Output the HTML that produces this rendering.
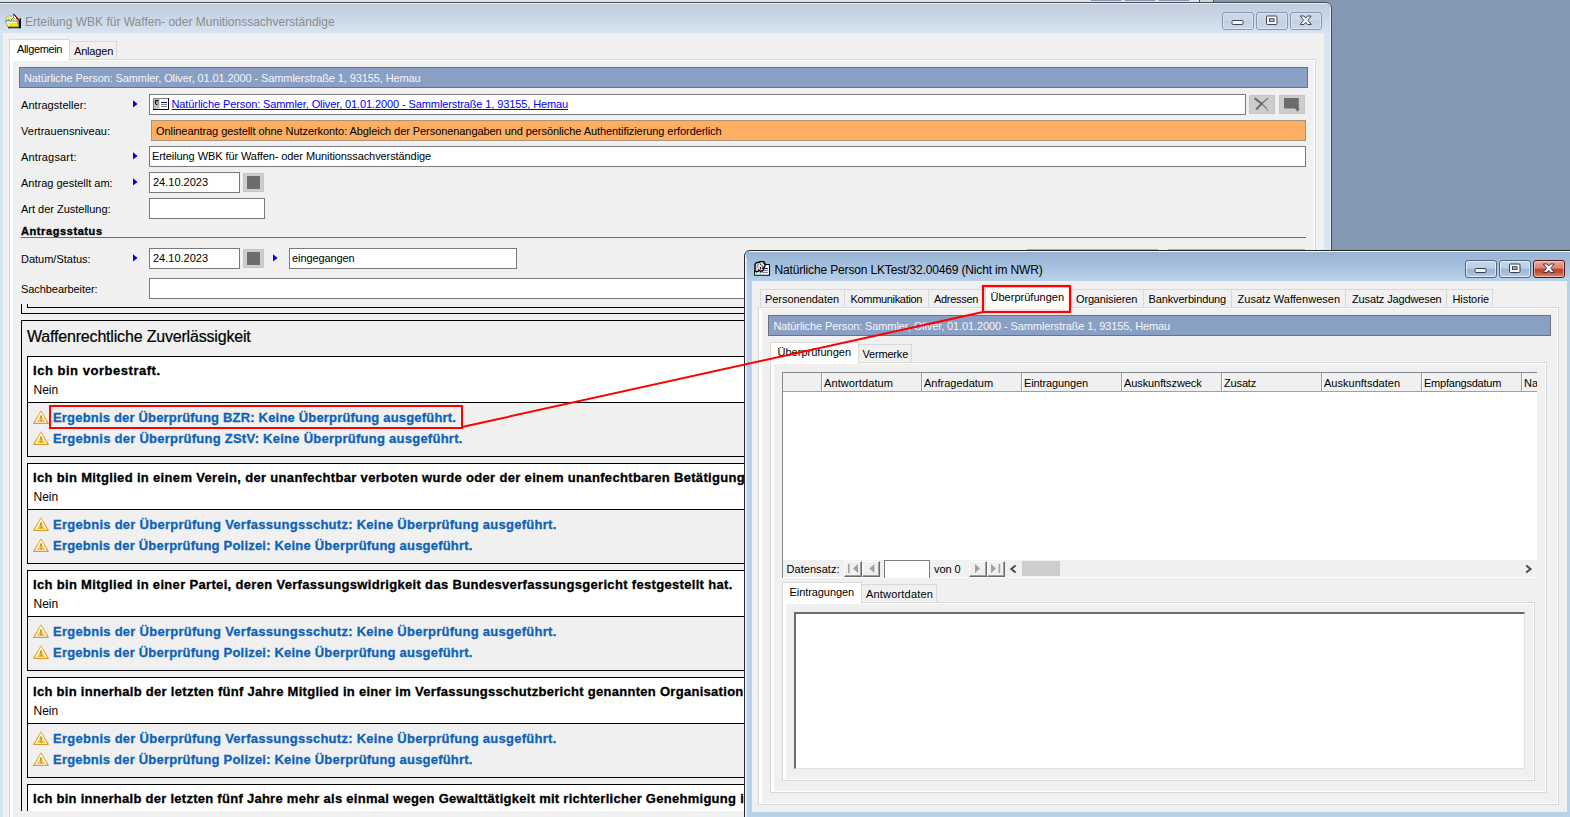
<!DOCTYPE html>
<html><head><meta charset="utf-8"><title>UI</title>
<style>
html,body{margin:0;padding:0;overflow:hidden}
body{width:1570px;height:817px;position:relative;overflow:hidden;background:#8399b1;font-family:'Liberation Sans',sans-serif}
body div,body span,body svg{position:absolute;display:block}
body span{white-space:nowrap}
</style></head>
<body>
<div style="left:0;top:0;width:1570px;height:817px;overflow:hidden;background:#8399b1">
<div style="left:0px;top:0px;width:1199px;height:2px;background:#d7e4f2"></div>
<div style="left:1091px;top:0px;width:30px;height:1px;background:#8795b1"></div>
<div style="left:1125px;top:0px;width:30px;height:1px;background:#8795b1"></div>
<div style="left:1159px;top:0px;width:30px;height:1px;background:#8795b1"></div>
<div style="left:1199px;top:0px;width:1px;height:2px;background:#50535a"></div>
<div style="left:1200px;top:0px;width:13px;height:2px;background:#c6d3e1"></div>
<div style="left:1213px;top:0px;width:1px;height:2px;background:#50535a"></div>
<div style="left:-9px;top:2px;width:1341px;height:840px;box-sizing:border-box;border:1px solid #4b4b4d;border-radius:6px;background:#d7e4f2;box-shadow:inset 0 0 0 1px #e9eff8"></div>
<div style="left:0px;top:4px;width:1330px;height:29px;background:linear-gradient(#bfcddd,#c6d4e3 35%,#d7e4f2)"></div>
<div style="left:3px;top:33px;width:1321px;height:790px;background:#f0f0f0"></div>
<svg style="left:5px;top:13px" width="17" height="16" viewBox="0 0 17 16">
<path d="M3 15.2 L16 15.2 L16 5.2 L14.2 5.2 L13.5 8 L14 13.6 L3 13.6 Z" fill="#000"/>
<path d="M1 7.5 L1.5 4 L4 3 L7 3.5 L8.5 1 L13 6 L13.5 8.5 Z" fill="#fff" stroke="#8a8a8a" stroke-width=".7"/>
<path d="M8.5 1 L14.5 7.5" stroke="#000" stroke-width="1.1"/>
<path d="M2 4.5 L4 3.2 M3 6 L4.5 4.5" stroke="#f4e400" stroke-width="1.2"/>
<path d="M2.5 7 L4 7" stroke="#00c030" stroke-width="1.4"/>
<path d="M7.8 3.2 L8.6 2.6" stroke="#00d020" stroke-width="1.6"/>
<path d="M6 7 L8.8 4" stroke="#009010" stroke-width="1.2" stroke-dasharray="1 .5"/>
<path d="M8.5 7 L10 5.2" stroke="#9a9000" stroke-width="1.1" stroke-dasharray="1 .5"/>
<path d="M11.2 5.2 L13.8 8.4" stroke="#ff1010" stroke-width="1.3" stroke-dasharray="1 .4"/>
<path d="M14 5.8 L14.8 6.4" stroke="#f4e400" stroke-width="1.3"/>
<path d="M0.5 8 L12 8 L14 14 L3 14 Z" fill="#f2ea10" stroke="#7a7a7a" stroke-width=".8"/>
<path d="M1.4 8.8 L11.5 8.8 L11.8 9.8 L3 9.8 L4 13 L3 13 Z" fill="#fff"/>
<path d="M3.2 13.6 L14 13.6" stroke="#b0a800" stroke-width=".8"/>
</svg>
<span id="t0" style="left:25px;top:16px;font:400 12px/12px 'Liberation Sans',sans-serif;color:#8c8c8c;letter-spacing:0.002px;">Erteilung WBK für Waffen- oder Munitionssachverständige</span>
<div style="left:1222px;top:12px;width:32px;height:18px;box-sizing:border-box;border-radius:3px;border:1px solid #8798b7;background:linear-gradient(#cad7e6 0,#c9d6e6 45%,#c1cfe1 50%,#cbd9ea 100%);box-shadow:inset 0 0 0 1px rgba(255,255,255,.35)"></div><svg style="left:1231px;top:19px" width="14" height="8" viewBox="0 0 14 8"><rect x="1" y="1.5" width="11" height="4" rx="1" fill="#f4f4f4" stroke="#434856" stroke-width="1"/></svg>
<div style="left:1256px;top:12px;width:32px;height:18px;box-sizing:border-box;border-radius:3px;border:1px solid #8798b7;background:linear-gradient(#cad7e6 0,#c9d6e6 45%,#c1cfe1 50%,#cbd9ea 100%);box-shadow:inset 0 0 0 1px rgba(255,255,255,.35)"></div><svg style="left:1265px;top:15px" width="14" height="11" viewBox="0 0 14 11"><rect x="1.5" y="1" width="10.5" height="8.5" rx="1" fill="#f4f4f4" stroke="#434856" stroke-width="1"/><rect x="4.5" y="3.8" width="4.5" height="2.6" fill="#c6d3e3" stroke="#434856" stroke-width="1"/></svg>
<div style="left:1290px;top:12px;width:32px;height:18px;box-sizing:border-box;border-radius:3px;border:1px solid #8798b7;background:linear-gradient(#cad7e6 0,#c9d6e6 45%,#c1cfe1 50%,#cbd9ea 100%);box-shadow:inset 0 0 0 1px rgba(255,255,255,.35)"></div><svg style="left:1299px;top:15px" width="14" height="11" viewBox="0 0 14 11"><path d="M1.2 1 L5 1 L6.7 3.1 L8.4 1 L12.2 1 L8.9 5.2 L12.2 9.5 L8.4 9.5 L6.7 7.3 L5 9.5 L1.2 9.5 L4.5 5.2 Z" fill="#f4f4f4" stroke="#434856" stroke-width="1" stroke-linejoin="round"/></svg>
<div style="left:9px;top:59px;width:1307px;height:800px;box-sizing:border-box;border:1px solid #d9d9d9;background:#f0f0f0;box-shadow:inset 3px 0 0 #fff,inset 0 1px 0 #fff,inset -1px 0 0 #fff"></div>
<div style="left:69px;top:41px;width:48px;height:18px;box-sizing:border-box;border:1px solid #d9d9d9;border-bottom:none;background:#f0f0f0"></div>
<div style="left:9px;top:39px;width:61px;height:22px;box-sizing:border-box;border:1px solid #d9d9d9;border-bottom:none;background:#fff"></div>
<span id="t1" style="left:17px;top:44px;font:400 11px/11px 'Liberation Sans',sans-serif;color:#000;letter-spacing:-0.357px;">Allgemein</span>
<span id="t2" style="left:74px;top:46px;font:400 11px/11px 'Liberation Sans',sans-serif;color:#000;letter-spacing:-0.182px;">Anlagen</span>
<div style="left:19px;top:67px;width:1289px;height:21px;box-sizing:border-box;border:1px solid #6f7276;background:#8a9fc4"></div>
<span id="t3" style="left:24px;top:73px;font:400 11px/11px 'Liberation Sans',sans-serif;color:#f4f6fb;letter-spacing:-0.104px;">Natürliche Person: Sammler, Oliver, 01.01.2000 - Sammlerstraße 1, 93155, Hemau</span>
<span id="t4" style="left:21px;top:100px;font:400 11px/11px 'Liberation Sans',sans-serif;color:#000;letter-spacing:0.056px;">Antragsteller:</span>
<svg style="left:133px;top:100px" width="6" height="9" viewBox="0 0 6 9"><path d="M0 0.2 L4.6 3.9 L0 7.6 Z" fill="#0000f0"/></svg>
<div style="left:149px;top:94px;width:1097px;height:21px;box-sizing:border-box;border:1px solid #7a7a7a;background:#fff"></div>
<svg style="left:153px;top:98px" width="16" height="12" viewBox="0 0 16 12">
<rect x="0" y="0" width="16" height="12" fill="#fff"/>
<rect x="0.5" y="0.5" width="6" height="10.5" fill="#c0c0c0"/>
<path d="M0.5 11.5 L0.5 0.5 L15.5 0.5" stroke="#808080" fill="none"/>
<path d="M0 11.5 L15.5 11.5 L15.5 0" stroke="#000" fill="none"/>
<path d="M5.6 2.6 L3.2 2.6 Q2.2 2.8 2.3 4.5 Q2.6 6.6 4.4 6.8" stroke="#000" stroke-width="1.1" fill="none"/>
<path d="M4.2 3.2 L5.6 3.2 L5.6 7.2 L4.4 7.4 Z" fill="#909090"/>
<path d="M8 4.5 L14 4.5" stroke="#000080" stroke-width="1"/>
<path d="M8 6.5 L14 6.5 M8 8.5 L14 8.5" stroke="#808080" stroke-width="1"/>
</svg>
<span id="t5" style="left:171.5px;top:99px;font:400 11px/11px 'Liberation Sans',sans-serif;color:#0000ff;letter-spacing:-0.104px;text-decoration:underline;text-underline-offset:1px">Natürliche Person: Sammler, Oliver, 01.01.2000 - Sammlerstraße 1, 93155, Hemau</span>
<div style="left:1249px;top:95px;width:26px;height:19px;box-sizing:border-box;border:1px solid #c6c6c6;background:#cdcdcd"></div>
<svg style="left:1253px;top:96px" width="18" height="17" viewBox="0 0 18 17">
<path d="M2.2 2.6 L8.6 7.6" stroke="#6e6e6e" stroke-width="2" fill="none" stroke-linecap="round"/>
<path d="M8.6 7.6 L13.4 12.4" stroke="#6e6e6e" stroke-width="1.1" fill="none" stroke-linecap="round"/>
<circle cx="14.5" cy="14.3" r=".75" fill="#6e6e6e"/>
<path d="M14.7 2.4 L8.6 7.7" stroke="#6e6e6e" stroke-width="1.2" fill="none" stroke-linecap="round"/>
<path d="M8.6 7.7 L3.6 13" stroke="#6e6e6e" stroke-width="2.1" fill="none" stroke-linecap="round"/>
</svg>
<div style="left:1279px;top:95px;width:26px;height:19px;box-sizing:border-box;border:1px solid #c6c6c6;background:#cdcdcd"></div>
<svg style="left:1283px;top:97px" width="18" height="16" viewBox="0 0 18 16">
<path d="M1 1 L15.8 1 L15.8 11.6 L17 11.6 L14.5 14.8 L12 11.6 L1 11.6 Z" fill="#6b6b6b"/></svg>
<span id="t6" style="left:21px;top:126px;font:400 11px/11px 'Liberation Sans',sans-serif;color:#000;letter-spacing:0.025px;">Vertrauensniveau:</span>
<div style="left:151px;top:120px;width:1155px;height:21px;box-sizing:border-box;border:1px solid #a8937c;background:#fcaf62"></div>
<span id="t7" style="left:156px;top:126px;font:400 11px/11px 'Liberation Sans',sans-serif;color:#000;letter-spacing:-0.070px;">Onlineantrag gestellt ohne Nutzerkonto: Abgleich der Personenangaben und persönliche Authentifizierung erforderlich</span>
<span id="t8" style="left:21px;top:152px;font:400 11px/11px 'Liberation Sans',sans-serif;color:#000;letter-spacing:0.163px;">Antragsart:</span>
<svg style="left:133px;top:152px" width="6" height="9" viewBox="0 0 6 9"><path d="M0 0.2 L4.6 3.9 L0 7.6 Z" fill="#0000f0"/></svg>
<div style="left:149px;top:146px;width:1157px;height:21px;box-sizing:border-box;border:1px solid #7a7a7a;background:#fff"></div>
<span id="t9" style="left:152px;top:151px;font:400 11px/11px 'Liberation Sans',sans-serif;color:#000;letter-spacing:-0.084px;">Erteilung WBK für Waffen- oder Munitionssachverständige</span>
<span id="t10" style="left:21px;top:178px;font:400 11px/11px 'Liberation Sans',sans-serif;color:#000;letter-spacing:-0.006px;">Antrag gestellt am:</span>
<svg style="left:133px;top:178px" width="6" height="9" viewBox="0 0 6 9"><path d="M0 0.2 L4.6 3.9 L0 7.6 Z" fill="#0000f0"/></svg>
<div style="left:149px;top:172px;width:91px;height:21px;box-sizing:border-box;border:1px solid #7a7a7a;background:#fff"></div>
<span id="t11" style="left:153px;top:177px;font:400 11px/11px 'Liberation Sans',sans-serif;color:#000;letter-spacing:0.004px;">24.10.2023</span>
<div style="left:243px;top:173px;width:21px;height:19px;box-sizing:border-box;border:1px solid #c6c6c6;background:#cdcdcd"></div>
<div style="left:247px;top:176px;width:13px;height:13px;background:#6d6d6d"></div>
<span id="t12" style="left:21px;top:204px;font:400 11px/11px 'Liberation Sans',sans-serif;color:#000;letter-spacing:-0.014px;">Art der Zustellung:</span>
<div style="left:149px;top:198px;width:116px;height:21px;box-sizing:border-box;border:1px solid #7a7a7a;background:#fff"></div>
<span id="t13" style="left:21px;top:226px;font:700 11px/11px 'Liberation Sans',sans-serif;color:#000;letter-spacing:0.587px;-webkit-text-stroke:0.35px #000;">Antragsstatus</span>
<div style="left:21px;top:237px;width:1285px;height:1px;background:#6e6e6e"></div>
<span id="t14" style="left:21px;top:254px;font:400 11px/11px 'Liberation Sans',sans-serif;color:#000;letter-spacing:-0.008px;">Datum/Status:</span>
<svg style="left:133px;top:254px" width="6" height="9" viewBox="0 0 6 9"><path d="M0 0.2 L4.6 3.9 L0 7.6 Z" fill="#0000f0"/></svg>
<div style="left:149px;top:248px;width:91px;height:21px;box-sizing:border-box;border:1px solid #7a7a7a;background:#fff"></div>
<span id="t15" style="left:153px;top:253px;font:400 11px/11px 'Liberation Sans',sans-serif;color:#000;letter-spacing:0.004px;">24.10.2023</span>
<div style="left:243px;top:249px;width:21px;height:19px;box-sizing:border-box;border:1px solid #c6c6c6;background:#cdcdcd"></div>
<div style="left:247px;top:252px;width:13px;height:13px;background:#6d6d6d"></div>
<svg style="left:273px;top:254px" width="6" height="9" viewBox="0 0 6 9"><path d="M0 0.2 L4.6 3.9 L0 7.6 Z" fill="#0000f0"/></svg>
<div style="left:289px;top:248px;width:228px;height:21px;box-sizing:border-box;border:1px solid #7a7a7a;background:#fff"></div>
<span id="t16" style="left:292px;top:253px;font:400 11px/11px 'Liberation Sans',sans-serif;color:#000;letter-spacing:-0.093px;">eingegangen</span>
<div style="left:1027px;top:249px;width:131px;height:1px;background:#adadad"></div>
<div style="left:1168px;top:249px;width:137px;height:1px;background:#adadad"></div>
<span id="t17" style="left:21px;top:284px;font:400 11px/11px 'Liberation Sans',sans-serif;color:#000;letter-spacing:-0.071px;">Sachbearbeiter:</span>
<div style="left:149px;top:278px;width:1157px;height:21px;box-sizing:border-box;border:1px solid #7a7a7a;background:#fff"></div>
<div style="left:13px;top:304px;width:760px;height:507px;overflow:hidden;background:#f0f0f0">
<div style="left:8px;top:-14px;width:1300px;height:24px;box-sizing:border-box;border:1px solid #000"></div>
<div style="left:14px;top:-20px;width:1280px;height:24px;box-sizing:border-box;border:1px solid #000"></div>
<div style="left:8px;top:16px;width:1300px;height:900px;box-sizing:border-box;border:1px solid #000"></div>
</div>
<span id="t18" style="left:27px;top:329px;font:400 16px/16px 'Liberation Sans',sans-serif;color:#000;letter-spacing:-0.182px;-webkit-text-stroke:0.2px #000;">Waffenrechtliche Zuverlässigkeit</span>
<div style="left:27px;top:356px;width:1280px;height:101px;box-sizing:border-box;border:1px solid #000;background:linear-gradient(#fff 0,#fff 45px,#000 45px,#000 46px,#f0f0f0 46px)"></div>
<span id="t19" style="left:33px;top:364px;font:700 13px/13px 'Liberation Sans',sans-serif;color:#000;letter-spacing:0.528px;-webkit-text-stroke:0.3px #000;max-width:711px;overflow:hidden;height:17px;">Ich bin vorbestraft.</span>
<span id="t20" style="left:33.5px;top:384px;font:400 12px/12px 'Liberation Sans',sans-serif;color:#000;letter-spacing:-0.022px;">Nein</span>
<svg style="left:33px;top:409.5px" width="16" height="15" viewBox="0 0 16 15">
<defs><linearGradient id="wg0" x1="0" y1="0" x2="0" y2="1"><stop offset="0" stop-color="#fff2a8"/><stop offset="1" stop-color="#f2c230"/></linearGradient>
<linearGradient id="wo0" x1="0" y1="0" x2="0" y2="1"><stop offset="0" stop-color="#f0c064"/><stop offset="1" stop-color="#d99a2c"/></linearGradient></defs>
<path d="M8 0.9 L15.2 13.4 L0.8 13.4 Z" fill="#fff" stroke="url(#wo0)" stroke-width="1.15" stroke-linejoin="round"/>
<path d="M8 4.2 L12.3 12 L3.7 12 Z" fill="url(#wg0)"/>
<path d="M7.2 5.4 L8.8 5.4 L8.5 9.4 L7.5 9.4 Z" fill="#b8781a"/><rect x="7.3" y="10.1" width="1.4" height="1.3" fill="#b8781a"/>
</svg>
<span id="t21" style="left:53px;top:411px;font:700 13px/13px 'Liberation Sans',sans-serif;color:#0f63b6;letter-spacing:0.185px;-webkit-text-stroke:0.3px #0f63b6;">Ergebnis der Überprüfung BZR: Keine Überprüfung ausgeführt.</span>
<svg style="left:33px;top:430.5px" width="16" height="15" viewBox="0 0 16 15">
<defs><linearGradient id="wg1" x1="0" y1="0" x2="0" y2="1"><stop offset="0" stop-color="#fff2a8"/><stop offset="1" stop-color="#f2c230"/></linearGradient>
<linearGradient id="wo1" x1="0" y1="0" x2="0" y2="1"><stop offset="0" stop-color="#f0c064"/><stop offset="1" stop-color="#d99a2c"/></linearGradient></defs>
<path d="M8 0.9 L15.2 13.4 L0.8 13.4 Z" fill="#fff" stroke="url(#wo1)" stroke-width="1.15" stroke-linejoin="round"/>
<path d="M8 4.2 L12.3 12 L3.7 12 Z" fill="url(#wg1)"/>
<path d="M7.2 5.4 L8.8 5.4 L8.5 9.4 L7.5 9.4 Z" fill="#b8781a"/><rect x="7.3" y="10.1" width="1.4" height="1.3" fill="#b8781a"/>
</svg>
<span id="t22" style="left:53px;top:432px;font:700 13px/13px 'Liberation Sans',sans-serif;color:#0f63b6;letter-spacing:0.254px;-webkit-text-stroke:0.3px #0f63b6;">Ergebnis der Überprüfung ZStV: Keine Überprüfung ausgeführt.</span>
<div style="left:27px;top:463px;width:1280px;height:101px;box-sizing:border-box;border:1px solid #000;background:linear-gradient(#fff 0,#fff 45px,#000 45px,#000 46px,#f0f0f0 46px)"></div>
<span id="t23" style="left:33px;top:471px;font:700 13px/13px 'Liberation Sans',sans-serif;color:#000;letter-spacing:0.333px;-webkit-text-stroke:0.3px #000;max-width:711px;overflow:hidden;height:17px;">Ich bin Mitglied in einem Verein, der unanfechtbar verboten wurde oder der einem unanfechtbaren Betätigungsverbot unterliegt.</span>
<span id="t24" style="left:33.5px;top:491px;font:400 12px/12px 'Liberation Sans',sans-serif;color:#000;letter-spacing:-0.022px;">Nein</span>
<svg style="left:33px;top:516.5px" width="16" height="15" viewBox="0 0 16 15">
<defs><linearGradient id="wg2" x1="0" y1="0" x2="0" y2="1"><stop offset="0" stop-color="#fff2a8"/><stop offset="1" stop-color="#f2c230"/></linearGradient>
<linearGradient id="wo2" x1="0" y1="0" x2="0" y2="1"><stop offset="0" stop-color="#f0c064"/><stop offset="1" stop-color="#d99a2c"/></linearGradient></defs>
<path d="M8 0.9 L15.2 13.4 L0.8 13.4 Z" fill="#fff" stroke="url(#wo2)" stroke-width="1.15" stroke-linejoin="round"/>
<path d="M8 4.2 L12.3 12 L3.7 12 Z" fill="url(#wg2)"/>
<path d="M7.2 5.4 L8.8 5.4 L8.5 9.4 L7.5 9.4 Z" fill="#b8781a"/><rect x="7.3" y="10.1" width="1.4" height="1.3" fill="#b8781a"/>
</svg>
<span id="t25" style="left:53px;top:518px;font:700 13px/13px 'Liberation Sans',sans-serif;color:#0f63b6;letter-spacing:0.269px;-webkit-text-stroke:0.3px #0f63b6;">Ergebnis der Überprüfung Verfassungsschutz: Keine Überprüfung ausgeführt.</span>
<svg style="left:33px;top:537.5px" width="16" height="15" viewBox="0 0 16 15">
<defs><linearGradient id="wg3" x1="0" y1="0" x2="0" y2="1"><stop offset="0" stop-color="#fff2a8"/><stop offset="1" stop-color="#f2c230"/></linearGradient>
<linearGradient id="wo3" x1="0" y1="0" x2="0" y2="1"><stop offset="0" stop-color="#f0c064"/><stop offset="1" stop-color="#d99a2c"/></linearGradient></defs>
<path d="M8 0.9 L15.2 13.4 L0.8 13.4 Z" fill="#fff" stroke="url(#wo3)" stroke-width="1.15" stroke-linejoin="round"/>
<path d="M8 4.2 L12.3 12 L3.7 12 Z" fill="url(#wg3)"/>
<path d="M7.2 5.4 L8.8 5.4 L8.5 9.4 L7.5 9.4 Z" fill="#b8781a"/><rect x="7.3" y="10.1" width="1.4" height="1.3" fill="#b8781a"/>
</svg>
<span id="t26" style="left:53px;top:539px;font:700 13px/13px 'Liberation Sans',sans-serif;color:#0f63b6;letter-spacing:0.206px;-webkit-text-stroke:0.3px #0f63b6;">Ergebnis der Überprüfung Polizei: Keine Überprüfung ausgeführt.</span>
<div style="left:27px;top:570px;width:1280px;height:101px;box-sizing:border-box;border:1px solid #000;background:linear-gradient(#fff 0,#fff 45px,#000 45px,#000 46px,#f0f0f0 46px)"></div>
<span id="t27" style="left:33px;top:578px;font:700 13px/13px 'Liberation Sans',sans-serif;color:#000;letter-spacing:0.324px;-webkit-text-stroke:0.3px #000;max-width:711px;overflow:hidden;height:17px;">Ich bin Mitglied in einer Partei, deren Verfassungswidrigkeit das Bundesverfassungsgericht festgestellt hat.</span>
<span id="t28" style="left:33.5px;top:598px;font:400 12px/12px 'Liberation Sans',sans-serif;color:#000;letter-spacing:-0.022px;">Nein</span>
<svg style="left:33px;top:623.5px" width="16" height="15" viewBox="0 0 16 15">
<defs><linearGradient id="wg4" x1="0" y1="0" x2="0" y2="1"><stop offset="0" stop-color="#fff2a8"/><stop offset="1" stop-color="#f2c230"/></linearGradient>
<linearGradient id="wo4" x1="0" y1="0" x2="0" y2="1"><stop offset="0" stop-color="#f0c064"/><stop offset="1" stop-color="#d99a2c"/></linearGradient></defs>
<path d="M8 0.9 L15.2 13.4 L0.8 13.4 Z" fill="#fff" stroke="url(#wo4)" stroke-width="1.15" stroke-linejoin="round"/>
<path d="M8 4.2 L12.3 12 L3.7 12 Z" fill="url(#wg4)"/>
<path d="M7.2 5.4 L8.8 5.4 L8.5 9.4 L7.5 9.4 Z" fill="#b8781a"/><rect x="7.3" y="10.1" width="1.4" height="1.3" fill="#b8781a"/>
</svg>
<span id="t29" style="left:53px;top:625px;font:700 13px/13px 'Liberation Sans',sans-serif;color:#0f63b6;letter-spacing:0.269px;-webkit-text-stroke:0.3px #0f63b6;">Ergebnis der Überprüfung Verfassungsschutz: Keine Überprüfung ausgeführt.</span>
<svg style="left:33px;top:644.5px" width="16" height="15" viewBox="0 0 16 15">
<defs><linearGradient id="wg5" x1="0" y1="0" x2="0" y2="1"><stop offset="0" stop-color="#fff2a8"/><stop offset="1" stop-color="#f2c230"/></linearGradient>
<linearGradient id="wo5" x1="0" y1="0" x2="0" y2="1"><stop offset="0" stop-color="#f0c064"/><stop offset="1" stop-color="#d99a2c"/></linearGradient></defs>
<path d="M8 0.9 L15.2 13.4 L0.8 13.4 Z" fill="#fff" stroke="url(#wo5)" stroke-width="1.15" stroke-linejoin="round"/>
<path d="M8 4.2 L12.3 12 L3.7 12 Z" fill="url(#wg5)"/>
<path d="M7.2 5.4 L8.8 5.4 L8.5 9.4 L7.5 9.4 Z" fill="#b8781a"/><rect x="7.3" y="10.1" width="1.4" height="1.3" fill="#b8781a"/>
</svg>
<span id="t30" style="left:53px;top:646px;font:700 13px/13px 'Liberation Sans',sans-serif;color:#0f63b6;letter-spacing:0.206px;-webkit-text-stroke:0.3px #0f63b6;">Ergebnis der Überprüfung Polizei: Keine Überprüfung ausgeführt.</span>
<div style="left:27px;top:677px;width:1280px;height:101px;box-sizing:border-box;border:1px solid #000;background:linear-gradient(#fff 0,#fff 45px,#000 45px,#000 46px,#f0f0f0 46px)"></div>
<span id="t31" style="left:33px;top:685px;font:700 13px/13px 'Liberation Sans',sans-serif;color:#000;letter-spacing:0.290px;-webkit-text-stroke:0.3px #000;max-width:711px;overflow:hidden;height:17px;">Ich bin innerhalb der letzten fünf Jahre Mitglied in einer im Verfassungsschutzbericht genannten Organisation gewesen.</span>
<span id="t32" style="left:33.5px;top:705px;font:400 12px/12px 'Liberation Sans',sans-serif;color:#000;letter-spacing:-0.022px;">Nein</span>
<svg style="left:33px;top:730.5px" width="16" height="15" viewBox="0 0 16 15">
<defs><linearGradient id="wg6" x1="0" y1="0" x2="0" y2="1"><stop offset="0" stop-color="#fff2a8"/><stop offset="1" stop-color="#f2c230"/></linearGradient>
<linearGradient id="wo6" x1="0" y1="0" x2="0" y2="1"><stop offset="0" stop-color="#f0c064"/><stop offset="1" stop-color="#d99a2c"/></linearGradient></defs>
<path d="M8 0.9 L15.2 13.4 L0.8 13.4 Z" fill="#fff" stroke="url(#wo6)" stroke-width="1.15" stroke-linejoin="round"/>
<path d="M8 4.2 L12.3 12 L3.7 12 Z" fill="url(#wg6)"/>
<path d="M7.2 5.4 L8.8 5.4 L8.5 9.4 L7.5 9.4 Z" fill="#b8781a"/><rect x="7.3" y="10.1" width="1.4" height="1.3" fill="#b8781a"/>
</svg>
<span id="t33" style="left:53px;top:732px;font:700 13px/13px 'Liberation Sans',sans-serif;color:#0f63b6;letter-spacing:0.269px;-webkit-text-stroke:0.3px #0f63b6;">Ergebnis der Überprüfung Verfassungsschutz: Keine Überprüfung ausgeführt.</span>
<svg style="left:33px;top:751.5px" width="16" height="15" viewBox="0 0 16 15">
<defs><linearGradient id="wg7" x1="0" y1="0" x2="0" y2="1"><stop offset="0" stop-color="#fff2a8"/><stop offset="1" stop-color="#f2c230"/></linearGradient>
<linearGradient id="wo7" x1="0" y1="0" x2="0" y2="1"><stop offset="0" stop-color="#f0c064"/><stop offset="1" stop-color="#d99a2c"/></linearGradient></defs>
<path d="M8 0.9 L15.2 13.4 L0.8 13.4 Z" fill="#fff" stroke="url(#wo7)" stroke-width="1.15" stroke-linejoin="round"/>
<path d="M8 4.2 L12.3 12 L3.7 12 Z" fill="url(#wg7)"/>
<path d="M7.2 5.4 L8.8 5.4 L8.5 9.4 L7.5 9.4 Z" fill="#b8781a"/><rect x="7.3" y="10.1" width="1.4" height="1.3" fill="#b8781a"/>
</svg>
<span id="t34" style="left:53px;top:753px;font:700 13px/13px 'Liberation Sans',sans-serif;color:#0f63b6;letter-spacing:0.206px;-webkit-text-stroke:0.3px #0f63b6;">Ergebnis der Überprüfung Polizei: Keine Überprüfung ausgeführt.</span>
<div style="left:27px;top:784px;width:1280px;height:27px;box-sizing:border-box;border:1px solid #000;border-bottom:none;background:linear-gradient(#fff 0,#fff 45px,#000 45px,#000 46px,#f0f0f0 46px)"></div>
<span id="t35" style="left:33px;top:792px;font:700 13px/13px 'Liberation Sans',sans-serif;color:#000;letter-spacing:0.271px;-webkit-text-stroke:0.3px #000;max-width:711px;overflow:hidden;height:17px;">Ich bin innerhalb der letzten fünf Jahre mehr als einmal wegen Gewalttätigkeit mit richterlicher Genehmigung in Gewahrsam gewesen.</span>
<div style="left:13px;top:811px;width:740px;height:10px;background:#f0f0f0"></div>
<div style="left:744px;top:250px;width:840px;height:600px;box-sizing:border-box;border:1px solid #262626;border-radius:6px;background:#b9d1ea;box-shadow:inset 0 0 0 1px #f4f8fd"></div>
<div style="left:746px;top:252px;width:824px;height:29px;background:linear-gradient(#98b4d4,#a3bedc 40%,#b9d1ea)"></div>
<div style="left:746px;top:258px;width:1px;height:560px;background:#d3e2f3"></div>
<div style="left:752px;top:281px;width:815px;height:531px;background:#f0f0f0"></div>
<svg style="left:754px;top:261px" width="16" height="15" viewBox="0 0 16 15">
<path d="M8 3.5 L15.5 3.5 L15.5 14.3 L0.5 14.3 L0.5 9" fill="#fff" stroke="#000" stroke-width="1.1"/>
<path d="M0.6 13 L6.5 13" stroke="#c0c0c0" stroke-width="1"/>
<path d="M1 10 L1 3.5 Q1.5 1.5 3.5 1.5 L5 1.5 Q5.6 0.5 7 0.5 L9 0.5 Q10.8 0.8 11 3 L11 5 L9.5 7 L9.5 9.5 L7 10.5 L5.6 9.6 L4 10.4 L2.5 10.4 Z" fill="#e4e4e4" stroke="#000" stroke-width="1.4"/>
<path d="M3.4 4 L4.4 4 M3.2 5.6 L3.2 6.6 M6 3.2 L7.2 3.2 M7.4 4.8 L8.6 4.8 M6.4 6 L6.4 8.4 M8.4 6.4 L8.4 8 M4 8.4 L5 9 M9.6 2 L10 3" stroke="#000" stroke-width="1"/>
<path d="M10 7.5 L13.8 7.5" stroke="#000090" stroke-width="1.1"/>
<path d="M9.8 9.5 L13.8 9.5 M8 11.5 L13.8 11.5" stroke="#808080" stroke-width="1"/>
<path d="M7 9.6 L8 9.6 M8.8 9.6 L9.6 9.6" stroke="#c000c0" stroke-width="1"/>
<path d="M1.6 11.6 L3.4 11.6 M5.6 11.6 L7.2 11.6" stroke="#009090" stroke-width="1"/>
</svg>
<span id="t36" style="left:774.5px;top:264px;font:400 12px/12px 'Liberation Sans',sans-serif;color:#000;letter-spacing:-0.153px;">Natürliche Person LKTest/32.00469 (Nicht im NWR)</span>
<div style="left:1465px;top:260px;width:32px;height:18px;box-sizing:border-box;border-radius:3px;border:1px solid #55657f;background:linear-gradient(#c3d7ee 0,#b9cfe9 45%,#9db7d6 50%,#a2bcda 75%,#b9d1ec 100%);box-shadow:inset 0 0 0 1px rgba(255,255,255,.6)"></div><svg style="left:1474px;top:267px" width="14" height="8" viewBox="0 0 14 8"><rect x="1" y="1.5" width="11" height="4" rx="1" fill="#f4f4f4" stroke="#3a3d4e" stroke-width="1"/></svg>
<div style="left:1499px;top:260px;width:32px;height:18px;box-sizing:border-box;border-radius:3px;border:1px solid #55657f;background:linear-gradient(#c3d7ee 0,#b9cfe9 45%,#9db7d6 50%,#a2bcda 75%,#b9d1ec 100%);box-shadow:inset 0 0 0 1px rgba(255,255,255,.6)"></div><svg style="left:1508px;top:263px" width="14" height="11" viewBox="0 0 14 11"><rect x="1.5" y="1" width="10.5" height="8.5" rx="1" fill="#f4f4f4" stroke="#3a3d4e" stroke-width="1"/><rect x="4.5" y="3.8" width="4.5" height="2.6" fill="#a9c0dc" stroke="#3a3d4e" stroke-width="1"/></svg>
<div style="left:1533px;top:260px;width:32px;height:18px;box-sizing:border-box;border-radius:3px;border:1px solid #4e1515;background:linear-gradient(#e9a99b 0,#dc8270 45%,#c5432a 50%,#c9492f 70%,#dc8a76 100%);box-shadow:inset 0 0 0 1px rgba(255,255,255,.45)"></div><svg style="left:1542px;top:263px" width="14" height="11" viewBox="0 0 14 11"><path d="M1.2 1 L5 1 L6.7 3.1 L8.4 1 L12.2 1 L8.9 5.2 L12.2 9.5 L8.4 9.5 L6.7 7.3 L5 9.5 L1.2 9.5 L4.5 5.2 Z" fill="#fff" stroke="#3a3d4e" stroke-width="1" stroke-linejoin="round"/></svg>
<div style="left:758px;top:307px;width:801px;height:498px;box-sizing:border-box;border:1px solid #d9d9d9;background:#f0f0f0;box-shadow:inset 3px 0 0 #fff,inset 0 1px 0 #fff,inset -1px 0 0 #fff,inset 0 -1px 0 #fff"></div>
<div style="left:760px;top:289px;width:85px;height:18px;box-sizing:border-box;border:1px solid #d9d9d9;border-bottom:none;background:#f0f0f0"></div>
<span id="t37" style="left:765px;top:294px;font:400 11px/11px 'Liberation Sans',sans-serif;color:#000;letter-spacing:-0.040px;">Personendaten</span>
<div style="left:844px;top:289px;width:85px;height:18px;box-sizing:border-box;border:1px solid #d9d9d9;border-bottom:none;background:#f0f0f0"></div>
<span id="t38" style="left:850.5px;top:294px;font:400 11px/11px 'Liberation Sans',sans-serif;color:#000;letter-spacing:-0.325px;">Kommunikation</span>
<div style="left:928px;top:289px;width:58px;height:18px;box-sizing:border-box;border:1px solid #d9d9d9;border-bottom:none;background:#f0f0f0"></div>
<span id="t39" style="left:934px;top:294px;font:400 11px/11px 'Liberation Sans',sans-serif;color:#000;letter-spacing:-0.298px;">Adressen</span>
<div style="left:1071px;top:289px;width:73px;height:18px;box-sizing:border-box;border:1px solid #d9d9d9;border-bottom:none;background:#f0f0f0"></div>
<span id="t40" style="left:1076px;top:294px;font:400 11px/11px 'Liberation Sans',sans-serif;color:#000;letter-spacing:-0.157px;">Organisieren</span>
<div style="left:1143px;top:289px;width:89px;height:18px;box-sizing:border-box;border:1px solid #d9d9d9;border-bottom:none;background:#f0f0f0"></div>
<span id="t41" style="left:1148.5px;top:294px;font:400 11px/11px 'Liberation Sans',sans-serif;color:#000;letter-spacing:-0.137px;">Bankverbindung</span>
<div style="left:1231px;top:289px;width:115px;height:18px;box-sizing:border-box;border:1px solid #d9d9d9;border-bottom:none;background:#f0f0f0"></div>
<span id="t42" style="left:1237.5px;top:294px;font:400 11px/11px 'Liberation Sans',sans-serif;color:#000;letter-spacing:0.027px;">Zusatz Waffenwesen</span>
<div style="left:1345px;top:289px;width:102px;height:18px;box-sizing:border-box;border:1px solid #d9d9d9;border-bottom:none;background:#f0f0f0"></div>
<span id="t43" style="left:1352px;top:294px;font:400 11px/11px 'Liberation Sans',sans-serif;color:#000;letter-spacing:-0.132px;">Zusatz Jagdwesen</span>
<div style="left:1446px;top:289px;width:47px;height:18px;box-sizing:border-box;border:1px solid #d9d9d9;border-bottom:none;background:#f0f0f0"></div>
<span id="t44" style="left:1452.5px;top:294px;font:400 11px/11px 'Liberation Sans',sans-serif;color:#000;letter-spacing:-0.087px;">Historie</span>
<div style="left:985px;top:287px;width:86px;height:22px;box-sizing:border-box;border:1px solid #d9d9d9;border-bottom:none;background:#fff"></div>
<span id="t45" style="left:990.5px;top:292px;font:400 11px/11px 'Liberation Sans',sans-serif;color:#000;letter-spacing:0.016px;">Überprüfungen</span>
<div style="left:768px;top:315px;width:783px;height:21px;box-sizing:border-box;border:1px solid #6f7276;background:#8a9fc4"></div>
<span id="t46" style="left:773.5px;top:321px;font:400 11px/11px 'Liberation Sans',sans-serif;color:#f4f6fb;letter-spacing:-0.104px;">Natürliche Person: Sammler, Oliver, 01.01.2000 - Sammlerstraße 1, 93155, Hemau</span>
<div style="left:770px;top:362px;width:777px;height:431px;box-sizing:border-box;border:1px solid #d9d9d9;background:#f0f0f0;box-shadow:inset 3px 0 0 #fff,inset 0 1px 0 #fff,inset -1px 0 0 #fff,inset 0 -1px 0 #fff"></div>
<div style="left:858px;top:344px;width:54px;height:18px;box-sizing:border-box;border:1px solid #d9d9d9;border-bottom:none;background:#f0f0f0"></div>
<span id="t47" style="left:862.5px;top:349px;font:400 11px/11px 'Liberation Sans',sans-serif;color:#000;letter-spacing:-0.185px;">Vermerke</span>
<div style="left:770px;top:342px;width:89px;height:22px;box-sizing:border-box;border:1px solid #d9d9d9;border-bottom:none;background:#fff"></div>
<span id="t48" style="left:777.5px;top:347px;font:400 11px/11px 'Liberation Sans',sans-serif;color:#000;letter-spacing:0.016px;">Überprüfungen</span>
<div style="left:782px;top:372px;width:755px;height:206px;box-sizing:border-box;border:1px solid #828790;border-right:none;border-bottom:none;background:#fff"></div>
<div style="left:783px;top:373px;width:754px;height:18px;background:#f0f0f0;border-bottom:1px solid #a0a0a0"></div>
<div style="left:821px;top:373px;width:1px;height:18px;background:#a0a0a0"></div>
<div style="left:822px;top:373px;width:1px;height:18px;background:#fff"></div>
<span id="t49" style="left:824px;top:378px;font:400 11px/11px 'Liberation Sans',sans-serif;color:#000;letter-spacing:0.102px;max-width:713px;overflow:hidden;height:15px;">Antwortdatum</span>
<div style="left:921px;top:373px;width:1px;height:18px;background:#a0a0a0"></div>
<div style="left:922px;top:373px;width:1px;height:18px;background:#fff"></div>
<span id="t50" style="left:924px;top:378px;font:400 11px/11px 'Liberation Sans',sans-serif;color:#000;letter-spacing:-0.001px;max-width:613px;overflow:hidden;height:15px;">Anfragedatum</span>
<div style="left:1021px;top:373px;width:1px;height:18px;background:#a0a0a0"></div>
<div style="left:1022px;top:373px;width:1px;height:18px;background:#fff"></div>
<span id="t51" style="left:1024px;top:378px;font:400 11px/11px 'Liberation Sans',sans-serif;color:#000;letter-spacing:-0.113px;max-width:513px;overflow:hidden;height:15px;">Eintragungen</span>
<div style="left:1121px;top:373px;width:1px;height:18px;background:#a0a0a0"></div>
<div style="left:1122px;top:373px;width:1px;height:18px;background:#fff"></div>
<span id="t52" style="left:1124px;top:378px;font:400 11px/11px 'Liberation Sans',sans-serif;color:#000;letter-spacing:-0.091px;max-width:413px;overflow:hidden;height:15px;">Auskunftszweck</span>
<div style="left:1221px;top:373px;width:1px;height:18px;background:#a0a0a0"></div>
<div style="left:1222px;top:373px;width:1px;height:18px;background:#fff"></div>
<span id="t53" style="left:1224px;top:378px;font:400 11px/11px 'Liberation Sans',sans-serif;color:#000;letter-spacing:-0.153px;max-width:313px;overflow:hidden;height:15px;">Zusatz</span>
<div style="left:1321px;top:373px;width:1px;height:18px;background:#a0a0a0"></div>
<div style="left:1322px;top:373px;width:1px;height:18px;background:#fff"></div>
<span id="t54" style="left:1324px;top:378px;font:400 11px/11px 'Liberation Sans',sans-serif;color:#000;letter-spacing:0.018px;max-width:213px;overflow:hidden;height:15px;">Auskunftsdaten</span>
<div style="left:1421px;top:373px;width:1px;height:18px;background:#a0a0a0"></div>
<div style="left:1422px;top:373px;width:1px;height:18px;background:#fff"></div>
<span id="t55" style="left:1424px;top:378px;font:400 11px/11px 'Liberation Sans',sans-serif;color:#000;letter-spacing:-0.231px;max-width:113px;overflow:hidden;height:15px;">Empfangsdatum</span>
<div style="left:1521px;top:373px;width:1px;height:18px;background:#a0a0a0"></div>
<div style="left:1522px;top:373px;width:1px;height:18px;background:#fff"></div>
<span id="t56" style="left:1524px;top:378px;font:400 11px/11px 'Liberation Sans',sans-serif;color:#000;letter-spacing:-0.067px;max-width:13px;overflow:hidden;height:15px;">Na</span>
<div style="left:783px;top:560px;width:754px;height:17px;background:#f0f0f0"></div>
<div style="left:783px;top:577px;width:754px;height:1px;background:#fff"></div>
<span id="t57" style="left:786.5px;top:564px;font:400 11px/11px 'Liberation Sans',sans-serif;color:#000;letter-spacing:0.051px;">Datensatz:</span>
<div style="left:844px;top:561px;width:18px;height:16px;box-sizing:border-box;background:#f0f0f0;border-top:1px solid #fff;border-left:1px solid #fff;border-right:1px solid #6a6a6a;border-bottom:1px solid #6a6a6a;box-shadow:inset -1px -1px 0 #a0a0a0"></div><svg style="left:844px;top:561px" width="18" height="16" viewBox="0 0 18 16"><rect x="4" y="3" width="1.6" height="9" fill="#a0a0a0"/><path d="M14 3 L14 12 L9 7.5 Z" fill="#a0a0a0"/></svg>
<div style="left:862px;top:561px;width:18px;height:16px;box-sizing:border-box;background:#f0f0f0;border-top:1px solid #fff;border-left:1px solid #fff;border-right:1px solid #6a6a6a;border-bottom:1px solid #6a6a6a;box-shadow:inset -1px -1px 0 #a0a0a0"></div><svg style="left:862px;top:561px" width="18" height="16" viewBox="0 0 18 16"><path d="M12.4 3 L12.4 12 L7.4 7.5 Z" fill="#a0a0a0"/></svg>
<div style="left:884px;top:560px;width:46px;height:18px;box-sizing:border-box;background:#fff;border:1px solid #7a7a7a;border-bottom:none"></div>
<span id="t58" style="left:934px;top:564px;font:400 11px/11px 'Liberation Sans',sans-serif;color:#000;letter-spacing:-0.064px;">von 0</span>
<div style="left:969px;top:561px;width:18px;height:16px;box-sizing:border-box;background:#f0f0f0;border-top:1px solid #fff;border-left:1px solid #fff;border-right:1px solid #6a6a6a;border-bottom:1px solid #6a6a6a;box-shadow:inset -1px -1px 0 #a0a0a0"></div><svg style="left:969px;top:561px" width="18" height="16" viewBox="0 0 18 16"><path d="M6 3 L6 12 L11 7.5 Z" fill="#a0a0a0"/></svg>
<div style="left:987px;top:561px;width:18px;height:16px;box-sizing:border-box;background:#f0f0f0;border-top:1px solid #fff;border-left:1px solid #fff;border-right:1px solid #6a6a6a;border-bottom:1px solid #6a6a6a;box-shadow:inset -1px -1px 0 #a0a0a0"></div><svg style="left:987px;top:561px" width="18" height="16" viewBox="0 0 18 16"><path d="M4 3 L4 12 L9 7.5 Z" fill="#a0a0a0"/><rect x="11.6" y="3" width="1.6" height="9" fill="#a0a0a0"/></svg>
<svg style="left:1009px;top:564px" width="9" height="10" viewBox="0 0 9 10"><path d="M6.6 1.4 L2.2 5 L6.6 8.6" stroke="#484848" stroke-width="1.9" fill="none"/></svg>
<div style="left:1022px;top:561px;width:38px;height:15px;background:#cdcdcd"></div>
<svg style="left:1524px;top:564px" width="9" height="10" viewBox="0 0 9 10"><path d="M2.2 1.4 L6.6 5 L2.2 8.6" stroke="#484848" stroke-width="1.9" fill="none"/></svg>
<div style="left:782px;top:602px;width:753px;height:179px;box-sizing:border-box;border:1px solid #d9d9d9;background:#f0f0f0;box-shadow:inset 3px 0 0 #fff,inset 0 1px 0 #fff,inset -1px 0 0 #fff,inset 0 -1px 0 #fff"></div>
<div style="left:861px;top:584px;width:76px;height:18px;box-sizing:border-box;border:1px solid #d9d9d9;border-bottom:none;background:#f0f0f0"></div>
<span id="t59" style="left:866px;top:589px;font:400 11px/11px 'Liberation Sans',sans-serif;color:#000;letter-spacing:0.189px;">Antwortdaten</span>
<div style="left:782px;top:582px;width:80px;height:22px;box-sizing:border-box;border:1px solid #d9d9d9;border-bottom:none;background:#fff"></div>
<span id="t60" style="left:789.5px;top:587px;font:400 11px/11px 'Liberation Sans',sans-serif;color:#000;letter-spacing:-0.071px;">Eintragungen</span>
<div style="left:794px;top:612px;width:731px;height:157px;box-sizing:border-box;background:#fff;border-top:2px solid #6c6c6c;border-left:2px solid #6c6c6c;border-right:1px solid #e3e3e3;border-bottom:1px solid #e3e3e3"></div>
<svg style="left:0;top:0" width="1570" height="817" viewBox="0 0 1570 817">
<rect x="50" y="406" width="412" height="22" fill="none" stroke="#ff0000" stroke-width="2"/>
<rect x="983" y="286" width="87" height="26" fill="none" stroke="#ff0000" stroke-width="2.2"/>
<path d="M462 427 L983 312" stroke="#ff0000" stroke-width="2" fill="none"/>
</svg>
</div>
</body></html>
